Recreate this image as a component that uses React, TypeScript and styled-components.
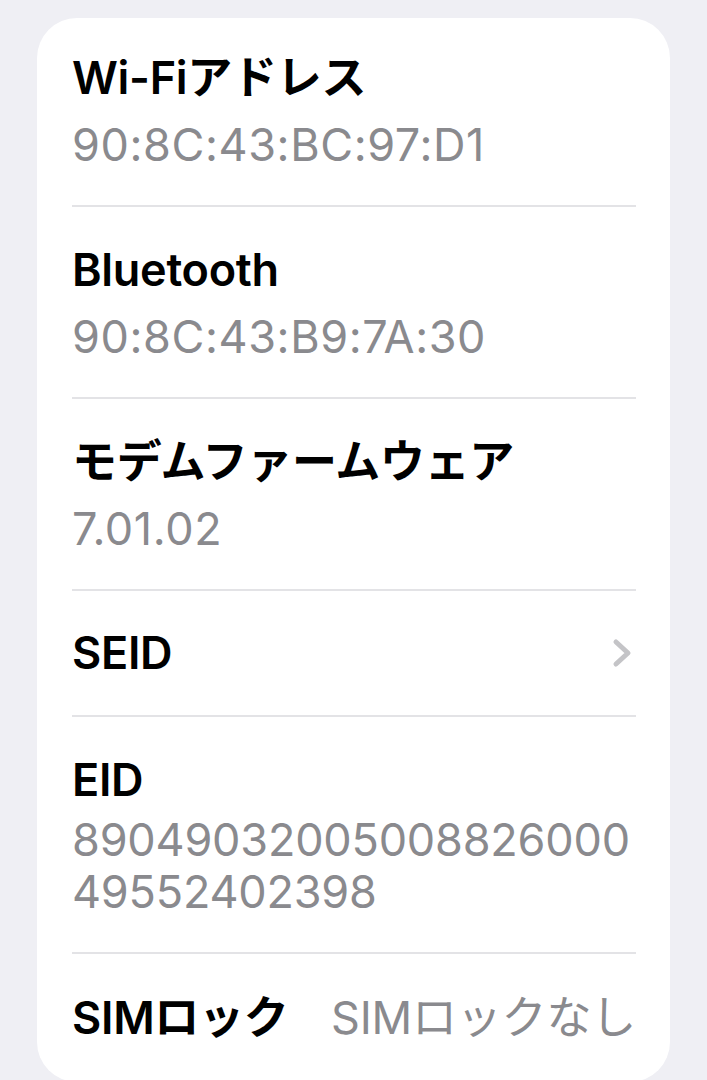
import React from 'react';
import styled, { createGlobalStyle } from 'styled-components';

const GlobalStyle = createGlobalStyle`
  html, body {
    margin: 0;
    padding: 0;
    background: #efeff4;
  }
  body {
    font-family: Inter, "Noto Sans CJK JP", sans-serif;
    -webkit-font-smoothing: antialiased;
  }
`;

const Page = styled.div`
  padding: 18px 37px 0 37px;
  min-height: 1080px;
  box-sizing: border-box;
`;

const Card = styled.div`
  background: #ffffff;
  border-radius: 40px;
  padding: 0 34px 0 35px;
`;

const Row = styled.div<{ $first?: boolean; $gap?: number }>`
  display: flex;
  flex-direction: column;
  gap: ${(p) => p.$gap ?? 15}px;
  padding: ${(p) => (p.$first ? '34px' : '37px')} 0 34px 0;
  border-bottom: 2px solid #e3e3e6;
`;

const InlineRow = styled.div<{ $last?: boolean }>`
  display: flex;
  align-items: center;
  justify-content: space-between;
  height: ${(p) => (p.$last ? '128px' : '126px')};
  box-sizing: border-box;
  border-bottom: ${(p) => (p.$last ? 'none' : '2px solid #e3e3e6')};
`;

const Title = styled.div`
  font-size: 45px;
  line-height: 52px;
  font-weight: 600;
  color: #000000;
  letter-spacing: -0.3px;
`;

const Value = styled.div<{ $spacing?: number }>`
  font-size: 45px;
  line-height: 52px;
  font-weight: 400;
  color: #8a8a8e;
  letter-spacing: ${(p) => p.$spacing ?? -0.2}px;
  white-space: nowrap;
`;

const Chevron = styled.svg`
  width: 24px;
  height: 30px;
  margin-right: 2px;
`;

const items = [
  { title: 'Wi-Fiアドレス', value: '90:8C:43:BC:97:D1' },
  { title: 'Bluetooth', value: '90:8C:43:B9:7A:30' },
  { title: 'モデムファームウェア', value: '7.01.02' },
];

const App = function () {
  return (
    <Page>
      <GlobalStyle />
      <Card>
        {items.map((it, i) => (
          <Row key={it.title} $first={i === 0}>
            <Title>{it.title}</Title>
            <Value $spacing={0.6}>{it.value}</Value>
          </Row>
        ))}
        <InlineRow>
          <Title>SEID</Title>
          <Chevron viewBox="0 0 24 30">
            <path d="M6 4 L18 15 L6 26" fill="none" stroke="#c4c4c7" strokeWidth="5" strokeLinecap="round" strokeLinejoin="round" />
          </Chevron>
        </InlineRow>
        <Row $gap={8}>
          <Title>EID</Title>
          <Value>
            89049032005008826000
            <br />
            49552402398
          </Value>
        </Row>
        <InlineRow $last>
          <Title>SIMロック</Title>
          <Value>SIMロックなし</Value>
        </InlineRow>
      </Card>
    </Page>
  );
};

export default App;
